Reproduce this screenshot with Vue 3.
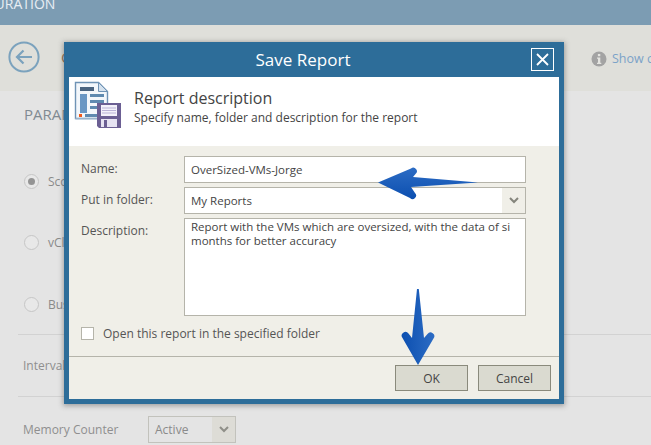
<script setup>
const radios = [
  { label: 'Scope', on: true },
  { label: 'vCloud', on: false },
  { label: 'Business View', on: false },
]
</script>

<template>
  <div class="page">
    <div class="topbar"><span class="topbar-text">CONFIGURATION</span></div>
    <div class="subbar">
      <svg class="back" width="32" height="32" viewBox="0 0 32 32" fill="none" stroke="#7ba2bd" stroke-width="2">
        <circle cx="16" cy="16" r="14.6" />
        <path d="M24 16H9M15.5 9.500L9 16l6.500 6.500" stroke-width="2.200" />
      </svg>
      <span class="subtitle">Oversized VMs</span>
      <svg class="info" width="16" height="16" viewBox="0 0 16 16">
        <circle cx="8" cy="8" r="7.500" fill="#a3a3a3" />
        <rect x="6.900" y="3" width="2.400" height="2.200" fill="#e4e4e0" />
        <path d="M6 6.600h3.300v5.200h1v1.200H6v-1.200h1V7.800H6z" fill="#e4e4e0" />
      </svg>
      <span class="show">Show chart</span>
    </div>
    <div class="content">
      <div class="heading">PARAMETERS</div>
      <div class="radios">
        <div v-for="r in radios" :key="r.label" class="radio-row">
          <span class="radio"><span v-if="r.on" class="dot"></span></span>
          <span>{{ r.label }}</span>
        </div>
      </div>
      <div class="row interval">Interval</div>
      <div class="row memory">
        <span class="memory-label">Memory Counter</span>
        <div class="bg-select">
          <span class="bg-value">Active</span>
          <span class="bg-caret">
            <svg width="10" height="7" viewBox="0 0 10 7" fill="none" stroke="#8f8f88" stroke-width="2"><path d="M1 1l4 4 4-4" /></svg>
          </span>
        </div>
      </div>
    </div>

    <div class="modal">
      <div class="modal-title">
        <span>Save Report</span>
        <button class="close" type="button" aria-label="Close">
          <svg width="13" height="13" viewBox="0 0 13 13" stroke="#fff" stroke-width="1.800"><path d="M1 1l11 11M12 1L1 12" /></svg>
        </button>
      </div>
      <div class="modal-head">
        <svg class="report-icon" width="48" height="47" viewBox="0 0 48 47">
          <path d="M1.500 1.500h23l9 9v27h-32z" fill="#f3f7fb" stroke="#6f93b5" stroke-width="1.400" />
          <path d="M24.500 1.500v9h9z" fill="#d5e2ee" stroke="#6f93b5" />
          <path d="M1.500 37.500h32v1.500h-32z" fill="#c5d4e2" />
          <rect x="6" y="6" width="14" height="4" fill="#4a6480" />
          <rect x="6" y="13" width="7" height="19" fill="#6a97c4" />
          <rect x="16" y="13" width="14" height="3" fill="#5f8ab0" />
          <rect x="16" y="19" width="14" height="3" fill="#5f8ab0" />
          <rect x="16" y="25" width="8" height="3" fill="#5f8ab0" />
          <rect x="5" y="33" width="3" height="3" fill="#f0591c" />
          <rect x="11" y="33" width="13" height="3" fill="#5f8ab0" />
          <path d="M23 22h24v25H25l-2-2z" fill="#6b5f93" />
          <rect x="27" y="24" width="16" height="11" fill="#f3f1fa" />
          <path d="M28 27h14M28 29.500h14M28 32h14" stroke="#b9b2d6" />
          <rect x="27" y="38" width="16" height="8" fill="#e6e3f2" />
          <rect x="30" y="39" width="3" height="7" fill="#6b5f93" />
        </svg>
        <div class="head-text">
          <div class="head-title">Report description</div>
          <div class="head-sub">Specify name, folder and description for the report</div>
        </div>
      </div>
      <div class="modal-body">
        <div class="form">
          <label class="lbl">Name:</label>
          <div class="field">OverSized-VMs-Jorge</div>
          <label class="lbl">Put in folder:</label>
          <div class="field select">
            <span class="select-value">My Reports</span>
            <span class="select-caret">
              <svg width="10" height="7" viewBox="0 0 10 7" fill="none" stroke="#85857c" stroke-width="2"><path d="M1 1l4 4 4-4" /></svg>
            </span>
          </div>
          <label class="lbl">Description:</label>
          <div class="field area">Report with the VMs which are oversized, with the data of si<br />months for better accuracy</div>
        </div>
        <div class="check-row">
          <span class="check"></span>
          <span>Open this report in the specified folder</span>
        </div>
      </div>
      <div class="modal-foot">
        <button class="btn" type="button">OK</button>
        <button class="btn" type="button">Cancel</button>
      </div>
    </div>

    <svg class="arrow arrow-left" width="102" height="35" viewBox="0 0 102 35">
      <defs>
        <linearGradient id="ga" x1="0" y1="0" x2="0" y2="1">
          <stop offset="0" stop-color="#2c6cc4" />
          <stop offset="1" stop-color="#0c4fb0" />
        </linearGradient>
      </defs>
      <path d="M101 16.500L36 11 38.500 8a3.500 3.500 0 0 0-4.500-5.500L1 16.500 33 32a3.500 3.500 0 0 0 5-5L34 21z" fill="url(#ga)" />
    </svg>
    <svg class="arrow arrow-down" width="34" height="78" viewBox="0 0 34 78">
      <defs>
        <linearGradient id="gb" x1="0" y1="0" x2="1" y2="0">
          <stop offset="0" stop-color="#0c4fb0" />
          <stop offset="1" stop-color="#2c6cc4" />
        </linearGradient>
      </defs>
      <path d="M16 1h1.800L23 50l3.500-4a3.500 3.500 0 0 1 6 4.500L17 77 1.500 50a3.500 3.500 0 0 1 6-4.500L11 50z" fill="url(#gb)" />
    </svg>
  </div>
</template>

<style scoped>
.page {
  position: relative;
  width: 651px;
  height: 445px;
  overflow: hidden;
  background: #e4e4e4;
  font-family: "Open Sans", "Liberation Sans", sans-serif;
  color: #333;
}
.topbar {
  height: 25px;
  background: #7c9cb3;
  overflow: hidden;
}
.topbar-text {
  display: block;
  margin: -6px 0 0 -57px;
  color: #e8eef3;
  font-size: 14px;
  line-height: 20px;
  white-space: nowrap;
}
.subbar {
  height: 66px;
  background: #dfdfda;
  display: flex;
  align-items: center;
  box-sizing: border-box;
  padding: 0 0 0 8px;
  overflow: hidden;
  white-space: nowrap;
}
.back { margin: -2px 0 0 0; flex: none; }
.subtitle { margin-left: 21px; width: 531px; flex: none; font-size: 15px; color: #8d6f52; margin-top: -2px; box-sizing: border-box; }
.info { flex: none; margin: 2px 0 0 -1px; }
.show { font-size: 12.500px; color: #7ba2c8; margin: 0 0 0 5px; }
.content {
  padding: 13px 0 0 18px;
  color: #8a8a8a;
  font-size: 12px;
}
.heading {
  margin-left: 6px;
  font-size: 15px;
  line-height: 20px;
  color: #808a92;
}
.radios { margin: 49px 0 0 6px; height: 161px; }
.radio-row {
  display: flex;
  align-items: center;
  gap: 9px;
  height: 16px;
  margin-bottom: 45.500px;
  white-space: nowrap;
}
.radio {
  width: 13px;
  height: 13px;
  border: 1px solid #c6c6c6;
  border-radius: 50%;
  background: #e8e8e8;
  display: flex;
  align-items: center;
  justify-content: center;
  flex: none;
}
.dot { width: 7px; height: 7px; border-radius: 50%; background: #949494; }
.row {
  display: flex;
  align-items: center;
  border-top: 1px solid #d2d2d2;
  white-space: nowrap;
}
.interval { height: 61px; margin-top: 0; font-size: 12px; padding-left: 5px; color: #8f8f8f; }
.memory { padding: 19px 0 0 5px; gap: 19px; }
.memory-label { color: #8f8f8f; font-size: 12px; width: 106px; flex: none; margin-right: 0; }
.bg-select {
  width: 88px;
  height: 27px;
  box-sizing: border-box;
  border: 1px solid #c2c2bc;
  display: flex;
  align-items: stretch;
}
.bg-value { flex: 1; padding-left: 6px; line-height: 25px; color: #8a8a8a; font-size: 12px; }
.bg-caret {
  width: 23px;
  background: #dddcd6;
  display: flex;
  align-items: center;
  justify-content: center;
}

.modal {
  position: absolute;
  left: 64px;
  top: 42px;
  width: 500px;
  height: 362px;
  box-sizing: border-box;
  border: 5px solid #2d6d99;
  border-top: 0;
  background: #f0efe8;
  box-shadow: 0 1px 5px 1px rgba(80, 80, 80, 0.45);
  display: flex;
  flex-direction: column;
}
.modal-title {
  position: relative;
  height: 35px;
  flex: none;
  background: #2d6d99;
  color: #fff;
  font-size: 17px;
  font-weight: 400;
  display: flex;
  align-items: center;
  justify-content: center;
  margin: 0 -5px;
  padding: 0 22px 0 0;
  box-sizing: border-box;
}
.close {
  position: absolute;
  right: 10px;
  top: 6px;
  width: 23px;
  height: 23px;
  padding: 0;
  border: 1px solid #fff;
  background: transparent;
  display: flex;
  align-items: center;
  justify-content: center;
}
.modal-head {
  height: 69px;
  flex: none;
  background: #fff;
  display: flex;
  align-items: flex-start;
  box-sizing: border-box;
  padding: 4px 0 0 5px;
}
.report-icon { flex: none; }
.head-text { margin-left: 12px; }
.head-title { font-size: 16px; line-height: 22px; margin-top: 6px; color: #444; }
.head-sub { font-size: 12px; line-height: 16px; margin-top: 1px; color: #444; }
.modal-body {
  flex: 1;
  padding: 10px 0 0 12px;
  font-size: 12px;
  color: #555;
  border-bottom: 1px solid #b5b4aa;
}
.form {
  display: grid;
  grid-template-columns: 103px 342px;
  grid-template-rows: 27px 27px 98px;
  row-gap: 4px;
}
.lbl { line-height: 17px; padding-top: 4px; }
.field {
  background: #fff;
  border: 1px solid #b5b4aa;
  box-sizing: border-box;
  padding: 0 6px;
  line-height: 26px;
  color: #444;
  font-size: 11.500px;
}
.select {
  display: flex;
  padding-right: 0;
}
.select-value { flex: 1; }
.select-caret {
  width: 23px;
  background: #f0efe8;
  display: flex;
  align-items: center;
  justify-content: center;
}
.area { line-height: 14px; padding-top: 1px; }
.check-row {
  display: flex;
  align-items: center;
  gap: 9px;
  margin-top: 10px;
  margin-left: 0;
  height: 15px;
}
.check {
  width: 13px;
  height: 13px;
  box-sizing: border-box;
  background: #fff;
  border: 1px solid #b5b4aa;
  flex: none;
}
.modal-foot {
  height: 42px;
  flex: none;
  display: flex;
  justify-content: flex-end;
  gap: 10px;
  padding: 8px 8px 0 0;
  box-sizing: border-box;
}
.btn {
  width: 73px;
  height: 26px;
  padding: 0;
  background: #dadad0;
  border: 1px solid #8a8a7c;
  border-radius: 0;
  color: #444;
  font-family: inherit;
  font-size: 12px;
}
.arrow { position: absolute; }
.arrow-left { left: 377px; top: 166px; }
.arrow-down { left: 401px; top: 288px; }
</style>
